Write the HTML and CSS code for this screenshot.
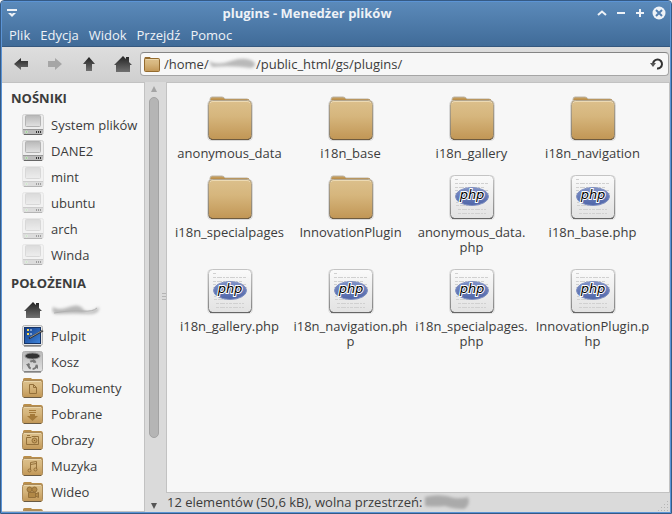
FILE: index.html
```html
<!DOCTYPE html>
<html lang="pl">
<head>
<meta charset="utf-8">
<title>plugins - Menedżer plików</title>
<link rel="stylesheet" href="styles.css">
</head>
<body>
<svg class="defs" aria-hidden="true">
  <defs>
    <linearGradient id="tan" x1="0" y1="0" x2="0" y2="1"><stop offset="0" stop-color="#dcc08c"/><stop offset=".4" stop-color="#d6b67d"/><stop offset="1" stop-color="#c19655"/></linearGradient>
    <linearGradient id="edge" x1="0" y1="0" x2="0" y2="1"><stop offset="0" stop-color="#b3a68e"/><stop offset=".9" stop-color="#8d8371"/><stop offset="1" stop-color="#554a3c"/></linearGradient>
    <linearGradient id="dark" x1="0" y1="0" x2="0" y2="1"><stop offset="0" stop-color="#222"/><stop offset="1" stop-color="#707070"/></linearGradient>
    <linearGradient id="paper" x1="0" y1="0" x2="0" y2="1"><stop offset="0" stop-color="#fafafa"/><stop offset="1" stop-color="#e2e2e2"/></linearGradient>
    <linearGradient id="paperEdge" x1="0" y1="0" x2="0" y2="1"><stop offset="0" stop-color="#c4c4c4"/><stop offset=".9" stop-color="#8a8a8a"/><stop offset="1" stop-color="#4c4c4c"/></linearGradient>
    <linearGradient id="screen" x1="0" y1="0" x2="0" y2="1"><stop offset="0" stop-color="#b9b9b9"/><stop offset="1" stop-color="#e2e2e2"/></linearGradient>
    <linearGradient id="phpBlue" x1="0" y1="0" x2="0" y2="1"><stop offset="0" stop-color="#7f92c8"/><stop offset="1" stop-color="#4f65a8"/></linearGradient>
    <linearGradient id="desk" x1="0" y1="0" x2="1" y2="1"><stop offset="0" stop-color="#123a86"/><stop offset="1" stop-color="#3f86dd"/></linearGradient>
    <filter id="soft" x="-20%" y="-50%" width="140%" height="200%"><feGaussianBlur stdDeviation="1.5"/></filter>
  </defs>
  <symbol id="folder" viewBox="0 0 48 48">
    <path d="M4 7V4.500Q4 2 6 2H16Q18 2 19 4H41Q43 4 44 7V12H4Z" fill="#c39a58" stroke="#bcb4a6"/>
    <path d="M5 5H43" stroke="#b08442"/>
    <rect x="1.500" y="5.500" width="45" height="40" rx="4" fill="none" stroke="#d8d8d8"/>
    <rect x="2.500" y="5.500" width="43" height="39" rx="4" fill="url(#tan)" stroke="url(#edge)"/>
    <path d="M4 8Q5 6.500 7 6.500H41Q43 6.500 44 8" fill="none" stroke="#ecdab4"/>
    <path d="M5 44.500H43" stroke="#6e5b40"/>
  </symbol>
  <symbol id="php" viewBox="0 0 48 48">
    <rect x="1.500" y="1.500" width="45" height="44" rx="4" fill="none" stroke="#dedede"/>
    <rect x="2.500" y="1.500" width="43" height="43" rx="4" fill="url(#paper)" stroke="url(#paperEdge)"/>
    <path d="M4 44.500H44" stroke="#666"/>
    <g stroke="#d0d0d0" fill="none" stroke-dasharray="3 1 5 1 2 1">
      <path d="M7 5.500H11M7 9.500H40M7 13.500H37M7 16.500H40M8 31.500H22M10 35.500H38M10 39.500H38"/>
      <path d="M7 19.500H15M36 19.500H41M8 28.500H14"/>
    </g>
    <ellipse cx="24" cy="22.500" rx="16.500" ry="9" fill="url(#phpBlue)" stroke="#7f8fc0"/>
    <text class="php-word" x="24" y="25" text-anchor="middle">php</text>
  </symbol>
  <symbol id="drive" viewBox="0 0 22 22">
    <rect x=".5" y=".5" width="21" height="20" rx="2" fill="#ededed" stroke="#d2d2d2"/>
    <rect x="3.500" y="1.500" width="15" height="11" rx="1" fill="url(#screen)" stroke="#b4b4b4"/>
    <path d="M1 15H21V19Q21 21 19 21H3Q1 21 1 19Z" fill="#bcbcbc"/>
    <path d="M1 15.500H21" stroke="#999"/><path d="M2 20.500H20" stroke="#666"/>
    <circle cx="4.500" cy="18" r="1" fill="#5fbf50" stroke="#d6e6d4"/>
    <path d="M14.500 17V19M16.500 17V19M18.500 17V19" stroke="#333"/>
  </symbol>
  <symbol id="home" viewBox="0 0 18 16"><path d="M9 0 12 3V1H15V6L18 9H16V16H2V9H0Z" fill="url(#dark)"/></symbol>
  <symbol id="small-folder" viewBox="0 0 22 22">
    <path d="M1 4V2.500Q1 1 2.500 1H9L10 2H19Q20.500 2 21 4V8H1Z" fill="#b98e4b"/>
    <rect x=".5" y="3.500" width="20" height="17" rx="2" fill="url(#tan)" stroke="#a98a5a"/>
    <path d="M2 4.500H19" stroke="#ead6ab"/><path d="M2 20.500H19" stroke="#695a43"/>
  </symbol>
</svg>

<div class="window">
  <header class="frame-top">
    <div class="titlebar">
      <button class="win-btn" aria-label="Menu okna"><svg width="10" height="9" viewBox="0 0 10 9"><path d="M0 1H10" stroke="#eef2f7" stroke-width="2"/><path d="M1 4 5 8 9 4Z" fill="#eef2f7"/><path d="M4 4H6L5 5Z" fill="#5480b1"/></svg></button>
      <h1 class="title">plugins - Menedżer plików</h1>
      <div class="win-controls">
        <button class="win-btn" aria-label="Zwiń"><svg width="10" height="6" viewBox="0 0 10 6"><path d="M1 5 5 1.500 9 5" fill="none" stroke="#eef2f7" stroke-width="2"/></svg></button>
        <button class="win-btn" aria-label="Minimalizuj"><svg width="8" height="2" viewBox="0 0 8 2"><path d="M0 1H8" stroke="#eef2f7" stroke-width="2"/></svg></button>
        <button class="win-btn" aria-label="Maksymalizuj"><svg width="8" height="8" viewBox="0 0 8 8"><path d="M0 4H8M4 0V8" stroke="#eef2f7" stroke-width="2"/></svg></button>
        <button class="win-btn" aria-label="Zamknij"><svg width="14" height="14" viewBox="0 0 14 14"><circle cx="7" cy="7" r="6.500" fill="#eef2f7"/><path d="M4 4 10 10M10 4 4 10" stroke="#5480b1" stroke-width="2"/></svg></button>
      </div>
    </div>
    <nav class="menubar" aria-label="Menu">
      <button>Plik</button><button>Edycja</button><button>Widok</button><button>Przejdź</button><button>Pomoc</button>
    </nav>
  </header>

  <div class="toolbar">
    <div class="tools">
      <button aria-label="Wstecz"><svg width="14" height="12" viewBox="0 0 14 12"><path d="M0 6 7 0V3H14V9H7V12Z" fill="url(#dark)"/></svg></button>
      <button aria-label="Dalej" disabled><svg width="14" height="12" viewBox="0 0 14 12"><path d="M14 6 7 0V3H0V9H7V12Z" fill="#a6a6a6"/></svg></button>
      <button aria-label="W górę"><svg width="12" height="14" viewBox="0 0 12 14"><path d="M6 0 12 7H9V14H3V7H0Z" fill="url(#dark)"/></svg></button>
      <button aria-label="Katalog domowy"><svg width="18" height="16"><use href="#home"/></svg></button>
    </div>
    <div class="path-box">
      <svg width="16" height="16" viewBox="0 0 16 16"><path d="M1 4V1.500H6L7 2.500H14L15 4Z" fill="#b08442" stroke="#946b2e"/><rect x=".5" y="2.500" width="15" height="13" rx="1" fill="url(#tan)" stroke="#946b2e"/><path d="M2 3.500H14" stroke="#ead6ab"/></svg>
      <div class="path-field">
        <input type="text" aria-label="Ścieżka" value="/home/&nbsp;&nbsp;&nbsp;&nbsp;&nbsp;&nbsp;&nbsp;&nbsp;&nbsp;&nbsp;&nbsp;&nbsp;&nbsp;&nbsp;/public_html/gs/plugins/">
        <svg class="path-smear" width="50" height="16" viewBox="0 0 50 16" aria-hidden="true"><path d="M2 5Q10 10 24 5T47 6Q50 10 44 12Q24 9 5 11Z" fill="#b9b9b9" filter="url(#soft)"/></svg>
      </div>
      <button aria-label="Odśwież"><svg width="14" height="14" viewBox="0 0 14 14"><path d="M3 7A4.500 4.500 0 1 1 7 11.500" fill="none" stroke="#333" stroke-width="2"/><path d="M0 6H6L3 10Z" fill="#555"/></svg></button>
    </div>
  </div>

  <div class="main">
    <aside class="sidebar">
      <h2>NOŚNIKI</h2>
      <ul>
        <li><a href="#"><svg width="22" height="22"><use href="#drive"/></svg>System plików</a></li>
        <li><a href="#"><svg width="22" height="22"><use href="#drive"/></svg>DANE2</a></li>
        <li><a href="#"><svg class="faded" width="22" height="22"><use href="#drive"/></svg>mint</a></li>
        <li><a href="#"><svg class="faded" width="22" height="22"><use href="#drive"/></svg>ubuntu</a></li>
        <li><a href="#"><svg class="faded" width="22" height="22"><use href="#drive"/></svg>arch</a></li>
        <li><a href="#"><svg class="faded" width="22" height="22"><use href="#drive"/></svg>Winda</a></li>
      </ul>
      <h2>POŁOŻENIA</h2>
      <ul>
        <li><a href="#" aria-label="Katalog domowy"><svg width="22" height="22" viewBox="0 0 22 22"><use href="#home" x="2" y="3" width="18" height="16"/></svg><svg width="52" height="16" viewBox="0 0 52 16"><path d="M2 5Q8 9 18 5T32 7T48 5Q49 12 38 12Q24 11 4 12Q0 9 2 5Z" fill="#b8b8b8" filter="url(#soft)"/><path d="M3 11Q20 8 31 9T46 6" fill="none" stroke="#b0b0b0"/></svg></a></li>
        <li><a href="#"><svg width="22" height="22" viewBox="0 0 22 22"><rect x=".5" y=".5" width="20" height="20" rx="2" fill="#e6e6e6" stroke="#b5b5b5"/><path d="M2 21H19" stroke="#555"/><rect x="2.500" y="2.500" width="16" height="16" fill="url(#desk)" stroke="#173465"/><path d="M5 4H7V6H5ZM5 8H7V10H5Z" fill="#ffd94d"/><path d="M8 5H10M8 9H10" stroke="#dce7f7"/><path d="M7 13.500 21 5.500" stroke="#333" stroke-width="2"/><path d="M8 12.500 21 5" stroke="#8c8c8c"/></svg>Pulpit</a></li>
        <li><a href="#"><svg width="22" height="22" viewBox="0 0 22 22"><rect x=".5" y=".5" width="20" height="20" rx="2" fill="url(#screen)" stroke="#b0b0b0"/><path d="M2 21H19" stroke="#555"/><ellipse cx="10.500" cy="5" rx="7.500" ry="3" fill="#333" stroke="#888"/><circle cx="10.500" cy="14" r="4" fill="none" stroke="#777" stroke-width="2" stroke-dasharray="6 2"/><path d="M4 13H8L6 16ZM11 8 14 10 11 12ZM13 16 16 14V18Z" fill="#777"/></svg>Kosz</a></li>
        <li><a href="#"><svg width="22" height="22" viewBox="0 0 22 22"><use href="#small-folder"/><path d="M7.500 7.500H11.500L14.500 10.500V16.500H7.500ZM11.500 7.500V10.500H14.500" fill="none" stroke="#94703a"/></svg>Dokumenty</a></li>
        <li><a href="#"><svg width="22" height="22" viewBox="0 0 22 22"><use href="#small-folder"/><path d="M7 7H14V8H7ZM7 9H14V10H7ZM8 11H13V13H16L10.500 18 5 13H8Z" fill="#a47a3a"/></svg>Pobrane</a></li>
        <li><a href="#"><svg width="22" height="22" viewBox="0 0 22 22"><use href="#small-folder"/><path d="M4.500 8.500H9L10 7.500H16.500V15.500H4.500ZM5 6.500H8" fill="none" stroke="#94703a"/><circle cx="12.500" cy="11.500" r="2.500" fill="#c19a5c" stroke="#94703a"/><path d="M12 11H13V12H12Z" fill="#7d5a27"/></svg>Obrazy</a></li>
        <li><a href="#"><svg width="22" height="22" viewBox="0 0 22 22"><use href="#small-folder"/><path d="M8.500 15V7.500L14.500 6.500V14M8.500 9.500 14.500 8.500" fill="none" stroke="#94703a"/><circle cx="7.500" cy="15.500" r="1.500" fill="none" stroke="#94703a"/><circle cx="13.500" cy="14.500" r="1.500" fill="none" stroke="#94703a"/></svg>Muzyka</a></li>
        <li><a href="#"><svg width="22" height="22" viewBox="0 0 22 22"><use href="#small-folder"/><g fill="#b18846" stroke="#94703a"><circle cx="7.500" cy="8.500" r="2.500"/><circle cx="12.500" cy="8.500" r="2.500"/><path d="M6.500 11.500H13.500V16.500H6.500ZM13.500 13 16.500 11.500V16.500L13.500 15Z"/></g></svg>Wideo</a></li>
        <li><a href="#" aria-label="Katalog"><svg width="22" height="22"><use href="#small-folder"/></svg></a></li>
      </ul>
    </aside>
    <div class="scrollbar" aria-hidden="true">
      <svg width="6" height="6" viewBox="0 0 6 6"><path d="M3 0 6 6H0Z" fill="#a4a4a4"/></svg>
      <div class="track"><div class="thumb"></div></div>
      <svg width="6" height="6" viewBox="0 0 6 6"><path d="M3 6 6 0H0Z" fill="#555"/></svg>
    </div>
    <div class="splitter" aria-hidden="true"><svg width="4" height="8" viewBox="0 0 4 8"><path d="M0 .5H4M0 3.500H4M0 6.500H4" stroke="#b4b4b4"/></svg></div>
    <div class="content">
      <main class="files">
        <a href="#"><svg><use href="#folder"/></svg><span>anonymous_data</span></a>
        <a href="#"><svg><use href="#folder"/></svg><span>i18n_base</span></a>
        <a href="#"><svg><use href="#folder"/></svg><span>i18n_gallery</span></a>
        <a href="#"><svg><use href="#folder"/></svg><span>i18n_navigation</span></a>
        <a href="#"><svg><use href="#folder"/></svg><span>i18n_specialpages</span></a>
        <a href="#"><svg><use href="#folder"/></svg><span>InnovationPlugin</span></a>
        <a href="#"><svg><use href="#php"/></svg><span>anonymous_data.<br>php</span></a>
        <a href="#"><svg><use href="#php"/></svg><span>i18n_base.php</span></a>
        <a href="#"><svg><use href="#php"/></svg><span>i18n_gallery.php</span></a>
        <a href="#"><svg><use href="#php"/></svg><span>i18n_navigation.ph<br>p</span></a>
        <a href="#"><svg><use href="#php"/></svg><span>i18n_specialpages.<br>php</span></a>
        <a href="#"><svg><use href="#php"/></svg><span>InnovationPlugin.p<br>hp</span></a>
      </main>
      <footer class="status">
        <span>12 elementów (50,6 kB), wolna przestrzeń:</span>
        <svg width="50" height="19" viewBox="0 0 50 19" aria-hidden="true"><path d="M3 4Q18 0 32 5Q40 6 46 4Q49 12 42 16Q31 16 23 13Q12 14 3 13Z" fill="#aaa" filter="url(#soft)"/></svg>
        <svg class="grip" width="11" height="11" viewBox="0 0 11 11" aria-hidden="true"><path d="M0 9.500H11M3 6.500H11M6 3.500H11M9 .5H11" stroke="#b5b5b5" stroke-dasharray="1 2"/></svg>
      </footer>
    </div>
  </div>
</div>
</body>
</html>
```
FILE: styles.css
```css
* { box-sizing: border-box; }

body {
  margin: 0;
  font: 13px/15px "Open Sans", "Noto Sans", sans-serif;
  color: #3c3c3c;
}

button {
  display: flex;
  align-items: center;
  justify-content: center;
  padding: 0;
  border: 0;
  background: none;
  font: inherit;
  color: inherit;
}

a { color: inherit; text-decoration: none; }
svg { display: block; flex: none; }
.defs { position: absolute; width: 0; height: 0; }

.window {
  display: flex;
  flex-direction: column;
  height: 100vh;
  border: 1px solid #355a85;
  border-radius: 4px 4px 0 0;
  box-shadow: inset 0 0 0 1px #5b94d6;
  padding: 1px;
  background: #dadada;
  overflow: hidden;
}

.frame-top {
  background: linear-gradient(#5b8aba, #406b98);
  border-bottom: 1px solid #35587f;
  color: #eef2f7;
}

.titlebar { display: flex; align-items: center; gap: 4px; height: 22px; padding: 0 2px 0 1px; }
.title { flex: 1; margin: 0; text-align: center; font-size: 13px; line-height: 22px; font-weight: 700; }
.win-controls { display: flex; gap: 1px; }
.win-btn { width: 18px; height: 20px; }

.menubar { display: flex; gap: 10px; height: 22px; padding: 0 7px; }

.toolbar {
  display: flex;
  align-items: center;
  height: 35px;
  padding: 0 1px 2px 2px;
  background: linear-gradient(#dedede, #cfcfcf);
}
.tools { display: flex; }
.tools button { width: 34px; height: 32px; }

.path-box {
  flex: 1;
  display: flex;
  align-items: center;
  gap: 4px;
  height: 24px;
  padding: 0 4px 0 3px;
  border: 1px solid #a5a5a5;
  border-top-color: #858585;
  border-radius: 4px;
  background: #f7f7f7;
}
.path-field { flex: 1; position: relative; }
.path-field input {
  display: block;
  width: 100%;
  padding: 0;
  border: 0;
  outline: 0;
  background: none;
  font: inherit;
  line-height: 20px;
  color: inherit;
}
.path-smear { position: absolute; left: 43px; top: 2px; }

.main { flex: 1; display: flex; min-height: 0; }

.sidebar {
  width: 143px;
  padding-top: 1px;
  border: 1px solid #c2c2c2;
  border-left: 0;
  background: #f7f7f7;
  overflow: hidden;
}
.sidebar h2 { margin: 0; padding-left: 9px; font-size: 13px; line-height: 28px; font-weight: 700; }
.sidebar ul { margin: 0; padding: 0; list-style: none; }
.sidebar ul + h2 { padding-top: 1px; }
.sidebar a { display: flex; align-items: center; gap: 7px; height: 26px; padding-left: 20px; white-space: nowrap; }
.faded { opacity: .45; }

.scrollbar {
  display: flex;
  flex-direction: column;
  align-items: center;
  gap: 5px;
  width: 17px;
  padding: 4px 0 3px;
}
.track { flex: 1; width: 10px; }
.thumb { height: 85%; border: 1px solid #a3a3a3; border-radius: 5px; background: #b5b5b5; }
.splitter { display: flex; align-items: center; justify-content: center; width: 4px; }

.content { flex: 1; display: flex; flex-direction: column; min-width: 0; }
.files {
  flex: 1;
  display: grid;
  grid-template-columns: repeat(auto-fill, 121px);
  align-content: start;
  row-gap: 13px;
  padding: 12px 2px 0;
  border: 1px solid #c2c2c2;
  background: #f7f7f7;
}
.files a { display: flex; flex-direction: column; align-items: center; gap: 3px; text-align: center; }
.files svg { width: 48px; height: 48px; }
.php-word {
  font: italic 400 13px "DejaVu Sans", sans-serif;
  fill: #000;
  stroke: #fff;
  stroke-width: 2px;
  paint-order: stroke;
}

.status { display: flex; align-items: center; height: 19px; padding: 0 1px; white-space: nowrap; }
.grip { margin-left: auto; align-self: flex-end; }
```
